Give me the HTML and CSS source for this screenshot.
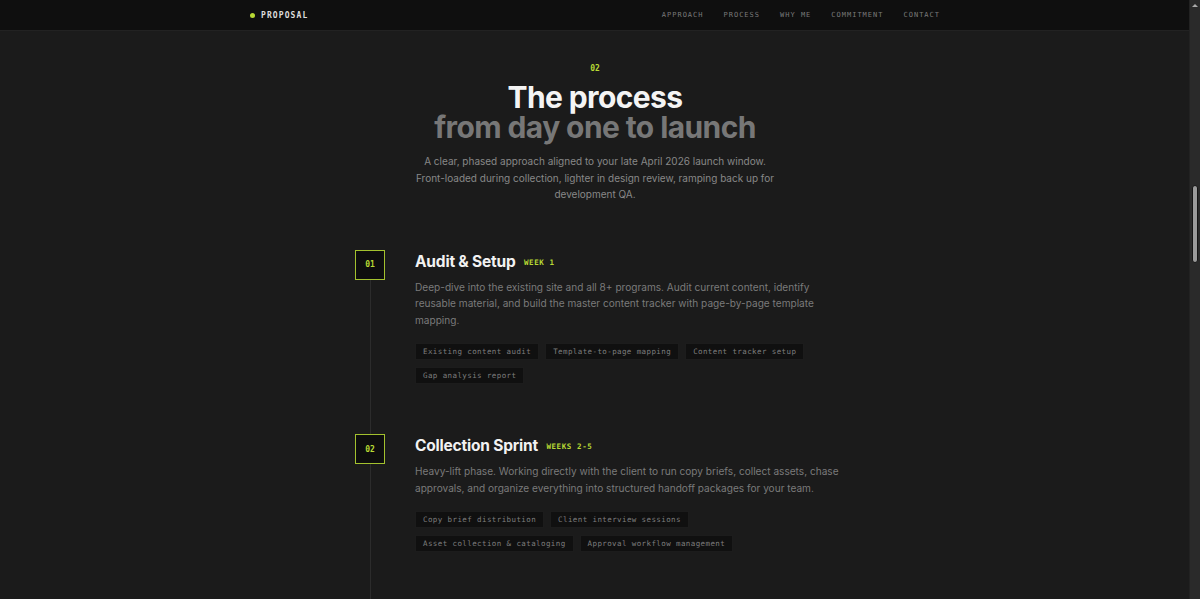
FILE: index.html
```
<!DOCTYPE html>
<html>
<head>
    <title>Proposal - The process</title>
    <link rel="stylesheet" href="styles.css">
</head>
<body>
<div class="topbar">
    <div class="topbar-inner">
        <div class="brand"><span class="brand-dot"></span>PROPOSAL</div>
        <div class="nav">
            <a href="#">APPROACH</a>
            <a href="#">PROCESS</a>
            <a href="#">WHY ME</a>
            <a href="#">COMMITMENT</a>
            <a href="#">CONTACT</a>
        </div>
    </div>
</div>

<div class="section">
    <div class="section-head">
        <div class="section-num">02</div>
        <h1 class="section-title">The process<br><span class="muted">from day one to launch</span></h1>
        <p class="section-lead">A clear, phased approach aligned to your late April 2026 launch window. Front-loaded during collection, lighter in design review, ramping back up for development QA.</p>
    </div>

    <div class="timeline">
        <div class="step">
            <div class="step-marker"><div class="step-box">01</div></div>
            <div class="step-body">
                <div class="step-title">Audit &amp; Setup <span class="step-week">WEEK 1</span></div>
                <p class="step-text">Deep-dive into the existing site and all 8+ programs. Audit current content, identify reusable material, and build the master content tracker with page-by-page template mapping.</p>
                <div class="tags">
                    <span class="tag">Existing content audit</span>
                    <span class="tag">Template-to-page mapping</span>
                    <span class="tag">Content tracker setup</span>
                    <span class="tag">Gap analysis report</span>
                </div>
            </div>
        </div>
        <div class="step">
            <div class="step-marker"><div class="step-box">02</div></div>
            <div class="step-body">
                <div class="step-title">Collection Sprint <span class="step-week">WEEKS 2-5</span></div>
                <p class="step-text">Heavy-lift phase. Working directly with the client to run copy briefs, collect assets, chase approvals, and organize everything into structured handoff packages for your team.</p>
                <div class="tags">
                    <span class="tag">Copy brief distribution</span>
                    <span class="tag">Client interview sessions</span>
                    <span class="tag">Asset collection &amp; cataloging</span>
                    <span class="tag">Approval workflow management</span>
                </div>
            </div>
        </div>
        <div class="step">
            <div class="step-marker"><div class="step-box">03</div></div>
            <div class="step-body">
                <div class="step-title">Design Review <span class="step-week">WEEKS 6-8</span></div>
                <p class="step-text">Lighter phase while design is underway. Review comps against collected content and flag gaps early.</p>
            </div>
        </div>
    </div>
</div>

<div class="scroll-track">
    <div class="scroll-arrow"></div>
    <div class="scroll-thumb"></div>
</div>
</body>
</html>
```
FILE: styles.css
```
html {
    color-scheme: dark;
}
body {
    margin: 0;
    padding-right: 10px;
    background-color: #1b1b1b;
    font-family: Inter, "Noto Sans", sans-serif;
    color: #eee;
}
.topbar {
    height: 30px;
    background-color: #0f0f0f;
    border-bottom: 1px solid #222;
}
.topbar-inner {
    width: 690px;
    height: 30px;
    margin: 0 auto;
    display: flex;
    align-items: center;
    justify-content: space-between;
}
.brand {
    display: flex;
    align-items: center;
    font-family: "DejaVu Sans Mono", monospace;
    font-size: 8px;
    font-weight: bold;
    letter-spacing: 1.1px;
    color: #ddd;
}
.brand-dot {
    width: 5px;
    height: 5px;
    border-radius: 50%;
    background-color: #b8d934;
    margin-right: 6px;
}
.nav {
    display: flex;
    gap: 20px;
}
.nav a {
    font-family: "DejaVu Sans Mono", monospace;
    font-size: 7px;
    letter-spacing: 1px;
    color: #7a7a7a;
    text-decoration: none;
}
.section {
    width: 690px;
    margin: 0 auto;
}
.section-head {
    text-align: center;
    padding-top: 33px;
}
.section-num {
    font-family: "DejaVu Sans Mono", monospace;
    font-size: 8px;
    font-weight: bold;
    color: #b8d934;
}
.section-title {
    margin: 9px 0 0;
    font-size: 30px;
    line-height: 30px;
    font-weight: 700;
    letter-spacing: -0.6px;
    color: #f4f4f4;
}
.section-title .muted {
    color: #777;
}
.section-lead {
    width: 364px;
    margin: 11px auto 0;
    font-size: 10px;
    line-height: 16.5px;
    color: #888;
}
.timeline {
    width: 490px;
    margin: 47px auto 0;
    padding-left: 10px;
}
.step {
    display: flex;
}
.step-marker {
    width: 60px;
    flex-shrink: 0;
    display: flex;
    flex-direction: column;
    align-items: flex-start;
}
.step-marker:after {
    content: '';
    flex: 1;
    width: 1px;
    margin-left: 15px;
    background-color: #2c2c2c;
}
.step-box {
    width: 28px;
    height: 28px;
    border: 1px solid #a3c12e;
    background-color: #0e0e0e;
    color: #b8d934;
    font-family: "DejaVu Sans Mono", monospace;
    font-size: 8px;
    font-weight: bold;
    display: flex;
    align-items: center;
    justify-content: center;
}
.step-body {
    padding-bottom: 50px;
    width: 428px;
}
.step-title {
    font-size: 15.5px;
    font-weight: 700;
    letter-spacing: -0.2px;
    color: #f2f2f2;
    padding-top: 2px;
}
.step-week {
    margin-left: 5px;
    font-family: "DejaVu Sans Mono", monospace;
    font-size: 7.5px;
    font-weight: bold;
    letter-spacing: 0.6px;
    color: #b8d934;
    vertical-align: 2px;
}
.step-text {
    margin: 8px 0 0;
    font-size: 10.1px;
    line-height: 16.5px;
    color: #7a7a7a;
}
.tags {
    margin-top: 15px;
    display: flex;
    flex-wrap: wrap;
    gap: 7px 6px;
}
.tag {
    background-color: #101010;
    border: 1px solid #1c1c1c;
    padding: 3px 7px;
    font-family: "DejaVu Sans Mono", monospace;
    font-size: 7.5px;
    line-height: 9px;
    letter-spacing: 0.4px;
    color: #7e7e7e;
}
.scroll-track {
    position: fixed;
    top: 0;
    right: 0;
    width: 10px;
    height: 100%;
    background-color: #2a2a2a;
    border-left: 1px solid #222;
}
.scroll-arrow {
    width: 0;
    height: 0;
    margin: 4px auto 0;
    border-left: 3px solid transparent;
    border-right: 3px solid transparent;
    border-bottom: 3px solid #aaa;
}
.scroll-thumb {
    position: absolute;
    top: 185px;
    left: 2px;
    width: 4px;
    height: 76px;
    border-radius: 3px;
    background-color: #9a9a9a;
    border: 1px solid #151515;
}
```
